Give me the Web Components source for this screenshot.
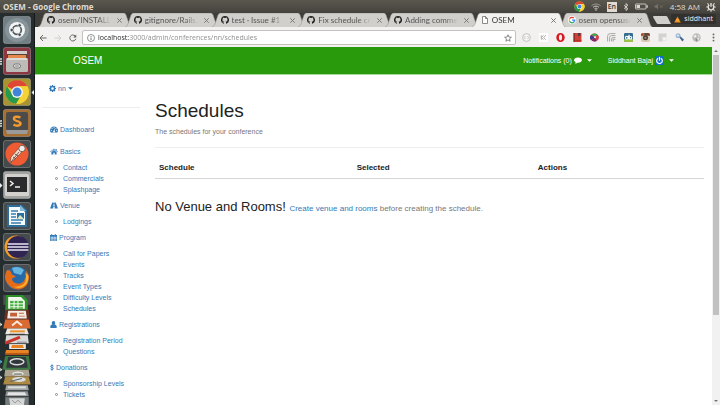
<!DOCTYPE html>
<html lang="en">
<head>
<meta charset="utf-8">
<title>OSEM</title>
<style>
  html, body { margin: 0; height: 100%; }
  body { overflow: hidden; background: #fff; font-family: "Liberation Sans", Arial, sans-serif; }
</style>
</head>
<body>
<osem-desktop></osem-desktop>
<script>
const base = '*,*::before{box-sizing:border-box}button{font:inherit;color:inherit;background:none;border:0;padding:0;margin:0;cursor:pointer}a{text-decoration:none}svg{display:block}';

function define(name, render) {
  customElements.define(name, class extends HTMLElement {
    connectedCallback() {
      if (this.shadowRoot) return;
      const t = document.createElement('template');
      const r = render(this);
      t.innerHTML = `<style>${base}${r.css}</style>${r.html}`;
      this.attachShadow({ mode: 'open' }).append(t.content.cloneNode(true));
    }
  });
}

/* Small glyphs: [viewBox, markup] */
const glyphs = {
  cog: ['0 0 16 16', '<path fill="currentColor" fill-rule="evenodd" d="M6.6 0h2.8l.4 2.2 1.3.5L13 1.4l1.7 1.8-1.2 1.8.5 1.2 2 .4v2.8l-2.1.4-.5 1.3 1.2 1.8-1.8 1.8-1.8-1.2-1.3.5L9.4 16H6.6l-.4-2.1-1.3-.5-1.8 1.2-1.8-1.8 1.2-1.8-.5-1.3L0 9.4V6.6l2-.4.6-1.3-1.2-1.8 1.8-1.8 1.8 1.3 1.2-.5zM8 5a3 3 0 1 0 0 6 3 3 0 0 0 0-6z"/>'],
  dash: ['0 0 18 16', '<path fill="currentColor" fill-rule="evenodd" d="M9 1a9 9 0 0 0-7.500 14h15A9 9 0 0 0 9 1zM9 2.500a1.200 1.200 0 1 1 0 2.400 1.200 1.200 0 0 1 0-2.400zM4.500 4.500a1.200 1.200 0 1 1 0 2.400 1.200 1.200 0 0 1 0-2.400zM2.800 9a1.200 1.200 0 1 1 0 2.400 1.200 1.200 0 0 1 0-2.400zM15.200 9a1.200 1.200 0 1 1 0 2.400 1.200 1.200 0 0 1 0-2.400zM13.500 4.500a1.200 1.200 0 1 1 0 2.400 1.200 1.200 0 0 1 0-2.400zM10 6l1 .3-.8 4a2.100 2.100 0 1 1-1.300-.3z"/>'],
  home: ['0 0 18 16', '<path fill="currentColor" d="M9 1L0 8.500l1 1.200L9 3l8 6.700 1-1.200-3-2.500V2h-2v2.300zM9 4.500L3 9.500V15h4.500v-4h3v4H15V9.500z"/>'],
  road: ['0 0 18 16', '<path fill="currentColor" fill-rule="evenodd" d="M5 1h3.300l-.2 2.500h1.800L9.700 1H13l5 14h-7.200l-.3-4.500h-3L7.200 15H0zM8 5l-.3 4h2.600L10 5z"/>'],
  calendar: ['0 0 16 16', '<path fill="currentColor" fill-rule="evenodd" d="M3 0h2v2h6V0h2v2h3v14H0V2h3zM1.500 6v2.500H4V6zm3.500 0v2.500h2.500V6zm3.500 0v2.500H11V6zM12 6v2.500h2.500V6zM1.500 9.500V12H4V9.500zm3.500 0V12h2.500V9.500zm3.500 0V12H11V9.500zm3.500 0V12h2.500V9.500zM1.500 13v1.800H4V13zM5 13v1.800h2.500V13zm3.500 0v1.800H11V13zm3.500 0v1.800h2.500V13z"/>'],
  user: ['0 0 16 16', '<path fill="currentColor" d="M8 0a4 4.500 0 0 1 2.500 8C14 8 15.500 10 15.500 15q0 1-1.500 1H2q-1.500 0-1.500-1C.5 10 2 8 5.500 8A4 4.500 0 0 1 8 0z"/>'],
  dollar: ['0 0 10 16', '<path fill="none" stroke="currentColor" stroke-width="2" d="M9 4.500C8 3.300 6.500 2.800 5 2.800c-2 0-3.400 1-3.400 2.500C1.600 9 8.600 7 8.600 10.600c0 1.600-1.500 2.600-3.600 2.600-1.700 0-3-.6-4-1.700M5 0v16"/>'],
  comment: ['0 0 18 16', '<path fill="currentColor" d="M9 1c5 0 9 2.500 9 6s-4 6-9 6l-1.500-.1C6 14.500 4 15.500 2 15.700c1-.8 1.600-2.200 1.600-3.600C1.400 11 0 9.100 0 7c0-3.500 4-6 9-6z"/>'],
  caret: ['0 0 8 8', '<path fill="currentColor" d="M0 2h8L4 6z"/>'],
  power: ['0 0 16 16', '<rect width="16" height="16" rx="1" fill="#1470c4"/><path fill="none" stroke="#fff" stroke-width="2" stroke-linecap="round" d="M5 4.500a5 5 0 1 0 6 0M8 2.500v5"/>'],
  github: ['0 0 16 16', '<path fill="#222" d="M8 0a8 8 0 0 0-2.500 15.600c.4 0 .5-.2.500-.4v-1.500c-2.200.5-2.700-1-2.700-1-.4-.9-.9-1.100-.9-1.100-.7-.5.100-.5.100-.5.800.1 1.200.8 1.200.8.700 1.200 1.900.9 2.300.7.100-.5.300-.9.500-1.100-1.800-.2-3.600-.9-3.600-4 0-.9.300-1.600.8-2.200 0-.2-.3-1 .1-2.100 0 0 .7-.2 2.200.8a8 8 0 0 1 4 0c1.500-1 2.200-.8 2.200-.8.400 1.100.1 1.900.1 2.100.5.600.8 1.300.8 2.200 0 3.100-1.900 3.700-3.700 3.900.3.300.6.800.6 1.500v2.300c0 .2.100.5.500.4A8 8 0 0 0 8 0z"/>'],
  page: ['0 0 16 16', '<path fill="#fff" stroke="#666" stroke-width="1.500" d="M3 1h6l4 4v10H3zM9 1v4h4"/>'],
  google: ['0 0 16 16', '<circle cx="8" cy="8" r="8" fill="#fff"/><g fill="none" stroke-width="2.500"><path stroke="#ea4335" d="M12 4.200A5.500 5.500 0 0 0 3.100 5.600"/><path stroke="#fbbc05" d="M3.200 5.400a5.500 5.500 0 0 0 0 5.200"/><path stroke="#34a853" d="M3.100 10.400a5.500 5.500 0 0 0 8.600 1.700"/><path stroke="#4285f4" d="M11.500 12.200A5.500 5.500 0 0 0 13.500 8H8"/></g>'],
  close: ['0 0 8 8', '<path stroke="#777" stroke-width="1.100" d="M1.500 1.500l5 5m0-5l-5 5"/>'],
  back: ['0 0 16 16', '<path fill="none" stroke="#5f5f5f" stroke-width="1.900" d="M15 8H2.500M8 2L2 8l6 6"/>'],
  forward: ['0 0 16 16', '<path fill="none" stroke="#ccc" stroke-width="1.900" d="M1 8h12.500M8 2l6 6-6 6"/>'],
  reload: ['0 0 16 16', '<path fill="none" stroke="#5f5f5f" stroke-width="1.900" d="M13.500 9.500A6 6 0 1 1 12 3.800"/><path fill="#5f5f5f" d="M14.500 1v6h-6z"/>'],
  info: ['0 0 16 16', '<circle cx="8" cy="8" r="7" fill="none" stroke="#666" stroke-width="1.400"/><path stroke="#666" stroke-width="1.800" d="M8 7v5M8 4v1.800"/>'],
  star: ['0 0 16 16', '<path fill="none" stroke="#666" stroke-width="1.500" d="M8 1.500l1.900 4.600 4.900.4-3.700 3.200 1.100 4.800L8 11.900l-4.200 2.600 1.100-4.800L1.200 6.500l4.900-.4z"/>'],
  chrome: ['0 0 28 28', '<circle cx="14" cy="14" r="13" fill="#e8c928"/><path fill="#df4633" d="M14 14L2.700 7.500A13 13 0 0 1 25.300 7.500H14z"/><path fill="#279a50" d="M2.700 7.500A13 13 0 0 0 13 27l5.600-10H14l-5 0z"/><path fill="#f5d336" d="M14 7.500h11.300A13 13 0 0 1 13 27l6.600-9.700z"/><circle cx="14" cy="14" r="6.500" fill="#f6f6f6"/><circle cx="14" cy="14" r="5" fill="#4285d8"/>'],
  wifi: ['0 0 20 16', '<g fill="none" stroke="#dcd8cf" stroke-width="1.800"><path opacity=".6" d="M1 5.500c5-4.500 13-4.500 18 0"/><path d="M4 8.500c3.500-3 8.500-3 12 0M7 11.500c2-1.500 4-1.500 6 0"/></g><circle cx="10" cy="14" r="1.500" fill="#dcd8cf"/>'],
  bluetooth: ['0 0 12 16', '<path fill="none" stroke="#dcd8cf" stroke-width="1.700" d="M2 4.500l8 7L6 15V1l4 3.500-8 7"/>'],
  battery: ['0 0 26 14', '<rect x="1" y="2" width="21" height="10" rx="1" fill="none" stroke="#dcd8cf" stroke-width="1.700"/><path fill="#dcd8cf" d="M3 4h7v6H3zM23 4.500h2.500v5H23z"/>'],
  mute: ['0 0 20 14', '<path fill="#77746c" d="M1 5h3l4-4v12L4 9H1z"/><path stroke="#77746c" stroke-width="1.500" d="M12 4.500l5 5m0-5l-5 5"/>'],
  gear: ['0 0 16 16', '<g fill="none" stroke="#e6e2da"><path stroke-width="2.200" d="M5.200 4.500a4.500 4.500 0 1 0 5.600 0M8 1.500v6"/><path stroke-width="1.800" d="M8 13v2.500M.5 8H3m10 0h2.500M2.300 2.300l2 2m7.400 7.400l2 2m0-11.400l-2 2m-7.400 7.400l-2 2"/></g>'],
  alert: ['0 0 16 16', '<path fill="#f28c0f" d="M8 1l7.500 14H.5z"/><path stroke="#ffd28a" stroke-width="1" d="M5 8h6M4 11h8"/>'],
  e1: ['0 0 16 16', '<circle cx="8" cy="8" r="7" fill="#f5f5f5" stroke="#b9b9b9" stroke-width="1.500"/><path fill="none" stroke="#aaa" stroke-width="1.300" d="M6 5.500L3.800 8 6 10.500M10 5.500L12.200 8 10 10.500"/>'],
  e2: ['0 0 16 16', '<path fill="#fff" d="M0 0h16v16H0z"/><path fill="none" stroke="#999" stroke-width="1.400" d="M8 4L4.500 8 8 12M12 4L8.500 8l3.500 4M4 4v8"/>'],
  e3: ['0 0 16 16', '<path fill="#d7191f" fill-rule="evenodd" d="M8 0a7.500 8 0 1 0 0 16A7.500 8 0 0 0 8 0zM8 2.500c1.700 0 2.800 2.300 2.800 5.500S9.700 13.500 8 13.500 5.200 11.200 5.200 8 6.300 2.500 8 2.500z"/>'],
  e4: ['0 0 16 16', '<rect x="1" width="14" height="16" rx="1" fill="#cf4038"/><path fill="#7d2620" d="M1 0h2v16H1z"/><path fill="#463c44" d="M9 0h4v6l-2-1.500L9 6z"/><path stroke="#a8302a" stroke-width="1.500" d="M4 13.500h11"/>'],
  e5: ['0 0 16 16', '<ellipse cx="8" cy="8" rx="8" ry="7" fill="#d43d4a"/><path fill="#3b3e8e" d="M8 8L2 12.500A8 7 0 0 1 2 3.500z"/><path fill="#3ba754" d="M8 8L3 2.500A8 7 0 0 1 13 2.500z"/><path fill="#7b2d70" d="M8 8l-5 5.500a8 7 0 0 0 9 .5z"/><circle cx="9" cy="7.500" r="2" fill="#e6d4df"/>'],
  e6: ['0 0 16 16', '<g fill="none" stroke="#a4a4a4" stroke-width="1.700"><path d="M1 15V6q0-5 5-5h9M4.500 15V8.500q0-4 4-4H15M8 15v-4q0-3 3-3h4"/></g><path fill="#a4a4a4" d="M10 10h5v2h-3v3h-2z"/>'],
  e7: ['0 0 16 16', '<rect width="16" height="16" rx="2" fill="#366d8f"/><path fill="#9fc34a" d="M0 11h16v3q0 2-2 2H2q-2 0-2-2z"/><circle cx="5" cy="8.500" r="2.500" fill="none" stroke="#fff" stroke-width="2"/><circle cx="11.500" cy="8.500" r="2.300" fill="none" stroke="#fff" stroke-width="2"/><path stroke="#fff" stroke-width="2" d="M9 3v8M8 5v6"/>'],
  e8: ['0 0 16 16', '<rect width="16" height="16" rx="3" fill="#d9cbb4"/><path fill="#6b4430" d="M0 5V3q0-3 3-3h10q3 0 3 3v2z"/><path fill="#c34a3c" d="M2 0h2v5H2z"/><path fill="#67a35a" d="M4 0h2v5H4z"/><circle cx="8" cy="8.500" r="4.500" fill="#4c3930"/><circle cx="8" cy="8.500" r="2" fill="#8b8a9a"/>'],
  e9: ['0 0 16 16', '<path fill="#d2d2d2" d="M1 1h14v6H8v8H1z"/><path fill="#f4f4f4" stroke="#ddd" d="M8.500 7.500h6v6h-6z"/>'],
  e10: ['0 0 16 16', '<circle cx="5.500" cy="5" r="4.500" fill="#9db8d6"/><path fill="#3d6590" d="M8 8l2-2 6 6-3 3z"/><circle cx="5" cy="4.500" r="2" fill="#dce8f3"/>'],
  e11: ['0 0 16 16', '<circle cx="8" cy="8" r="7.500" fill="#bcbcbc"/><path fill="#eee" d="M2 5l5-2 1 3-3 3zM9 9l4-1-2 5-2-1zM11 3l3 3-3 0z"/><path fill="#8e8e8e" d="M6 9l4 1-1 5H7z"/>'],
  menu: ['0 0 16 16', '<g fill="#666"><circle cx="8" cy="2.500" r="1.700"/><circle cx="8" cy="8" r="1.700"/><circle cx="8" cy="13.500" r="1.700"/></g>']
};
define('glyph-icon', el => {
  const [vb, body] = glyphs[el.getAttribute('name')];
  const [, , w, h] = vb.split(' ').map(Number);
  const size = Number(el.getAttribute('size') || 8);
  return {
    css: `:host{display:inline-block;flex:none;vertical-align:middle;height:${size}px;width:${Math.round(size * w / h)}px}svg{width:100%;height:100%}`,
    html: `<svg viewBox="${vb}" aria-hidden="true">${body}</svg>`
  };
});

/* Ubuntu desktop panel */
define('top-panel', () => ({
  css: `:host{display:flex;align-items:center;justify-content:space-between;height:13px;padding:0 4px 0 3px;color:#dfdbd2;background:linear-gradient(#5a574e,#45433e);font:8px/13px "Open Sans",sans-serif}
  b{font-weight:700}
  .tray{display:flex;align-items:center;gap:6px}
  .lang{background:#dfdbd2;color:#3c3b37;width:10px;height:10px;line-height:10px;font-size:7px;font-weight:600;text-align:center}`,
  html: `<b>OSEM - Google Chrome</b>
  <div class="tray"><glyph-icon name="chrome" size="11"></glyph-icon><glyph-icon name="wifi" size="8"></glyph-icon><span class="lang">En</span><glyph-icon name="bluetooth" size="8"></glyph-icon><glyph-icon name="battery" size="7"></glyph-icon><glyph-icon name="mute" size="7"></glyph-icon><span>4:58 AM</span><glyph-icon name="gear" size="10"></glyph-icon></div>`
}));

/* Launcher */
const apps = {
  ubuntu: ['#728086', '<circle cx="14" cy="14" r="12" fill="#9aa7ab" opacity=".5"/><circle cx="14" cy="14" r="8" fill="#f3f5f5"/><circle cx="14" cy="14" r="4.300" fill="none" stroke="#4f5b60" stroke-width="1.700"/><g fill="#3f4a4f" stroke="#f3f5f5" stroke-width=".7"><circle cx="8.700" cy="14" r="1.700"/><circle cx="16.600" cy="9.300" r="1.700"/><circle cx="16.600" cy="18.700" r="1.700"/></g>', ''],
  files: ['#8c3742', '<path fill="#5b4137" d="M4 6h20v8H4z"/><path fill="#e58a4d" d="M5 8h18v4H5z"/><path fill="#cfcdc9" d="M4 4h20v3H4z"/><rect x="3" y="11" width="22" height="14" rx="1.500" fill="#bdbbb8"/><path fill="#dddbd8" d="M4 11h20v2H4z"/><rect x="10.500" y="17" width="7" height="4" rx="2" fill="#eee" stroke="#777"/><path stroke="#777" d="M12 19h4"/>', 'multi'],
  chrome: ['#a89433', `<g transform="translate(1.500 1.500) scale(.9)">${glyphs.chrome[1]}</g>`, 'one focus'],
  sublime: ['#a86f32', '<rect x="3" y="3" width="22" height="19" rx="2" fill="#4b4b4b"/><path fill="#9a9a9a" d="M3 21h22l-1 4H4z"/><path fill="none" stroke="#f29a2e" stroke-width="2.500" d="M17.500 8.500C14 6.800 10.800 7.800 11 10c.2 2.500 6.300 1.700 6.500 4.300.1 2.400-3.500 3.200-7 1.400"/>', 'multi'],
  postman: ['#454a4c', '<circle cx="14" cy="14" r="11.500" fill="#ef5b32"/><path fill="#f2ddcc" stroke="#754636" stroke-width=".7" d="M7 23l1-6 7-8 3-1 1 2-1 3-7 7z"/><circle cx="19" cy="8.500" r="3.200" fill="#eee" stroke="#69483c" stroke-width=".8"/><path stroke="#69483c" stroke-width=".9" d="M8 22l8-10M10 17l3 2M12 14l3 2"/>', ''],
  terminal: ['#a3a3a1', '<rect x="2" y="3" width="24" height="22" rx="1.500" fill="#d2d1ce"/><rect x="4" y="6" width="20" height="15" fill="#2b2a2d"/><path fill="none" stroke="#f1f1f1" stroke-width="1.500" d="M7 10l3 2.500L7 15M12 16h5"/>', 'one'],
  writer: ['#454c50', '<path fill="#2d6d98" d="M4 3h15l5 5v17H4z"/><path fill="#f6fafc" d="M6 5h11l5 5v13H6z"/><path fill="#86b9da" d="M17 3l6 6h-6z"/><path stroke="#397fae" stroke-width="1.300" d="M8 9h7M8 12h5M8 15h5M8 18h12M8 21h10"/><path fill="#2a719f" d="M14 11h7v6h-7z"/><path fill="#dce8c2" d="M14 17l3-4 4 4z"/>', ''],
  eclipse: ['#454a4d', '<circle cx="13" cy="14" r="11.500" fill="#ee9d27"/><circle cx="15" cy="14" r="11" fill="#302453"/><path stroke="#e8e5f2" stroke-width="1.700" d="M4.500 11h21M4.500 14h21M4.500 17h21"/>', ''],
  firefox: ['#494d50', '<circle cx="14" cy="14" r="11.500" fill="#2768a8"/><path fill="#66b5dd" d="M9 4q7-3 12 2l-3 5-7-2z"/><path fill="#e66b18" d="M4 6q-4 7 0 13 5 7 12 6.500 9-1 10-11 0-5-3-8 1 5-1 8-2 6-8 5-5-1-5-5l4-2-4-2-2-4z"/><path fill="#f6b32e" d="M25.500 12q0 8-6 11-5 2-9-.5 9 1 12-5 1-4 0-9z"/>', '']
};
define('launcher-item', el => {
  const [bg, art, state] = apps[el.getAttribute('app')];
  const pips = (state.includes('multi') ? '<path stroke="#ddd" stroke-width="1.300" d="M0 12h2M0 14.500h2M0 17h2"/>' : '') +
    (state.includes('one') ? '<path fill="#eee" d="M0 12l2.500 2.500L0 17z"/>' : '') +
    (state.includes('focus') ? '<path fill="#eee" d="M34 12l-2.500 2.500L34 17z"/>' : '');
  return {
    css: ':host{display:block}button,svg{display:block;width:100%}',
    html: `<button aria-label="${el.getAttribute('app')}"><svg viewBox="0 0 34 28">${pips}<g transform="translate(3)"><rect x=".5" y=".5" width="27" height="27" rx="2" fill="${bg}" stroke="#fff" stroke-opacity=".25"/>${art}</g></svg></button>`
  };
});
define('app-launcher', () => ({
  css: `:host{display:flex;flex-direction:column;gap:3px;padding-top:3px;overflow:hidden;background:#262d2f;border-right:1px solid #15191a}
  .stack{width:100%}`,
  html: Object.keys(apps).map(a => `<launcher-item app="${a}"></launcher-item>`).join('') + `
  <svg class="stack" viewBox="0 0 34 112">
    <path fill="#4a4f50" d="M3 0h28v10H3z"/>
    <path fill="#2f8f2b" d="M6 0h17l5 5v11H5z"/><path fill="#f2f8ee" d="M8 2h13l4 4v8H8z"/><path fill="#45ad3b" d="M10 6h13v8H10z"/><path stroke="#fff" d="M10 9h13M10 12h13M14 6v8M18 6v8"/>
    <path fill="#6b2f20" d="M5 15h24l1 10H4z"/><path fill="#f4ece6" d="M8 16h18l1 8H7z"/><path fill="#c4603a" d="M10 18h7v4h-7zM19 18h5v1h-5zM19 21h6v1h-6z"/>
    <path fill="#d96a32" d="M5 25h24l2 9H3z"/><path fill="none" stroke="#fbe9de" stroke-width="2" d="M12 31l5-4 5 4"/>
    <path fill="#ece9e4" d="M7 34h20l2 6H5z"/><path fill="#e9922e" d="M10 36h15v2H10z"/><path stroke="#333" d="M9 40h16"/>
    <path fill="#d9d9d9" d="M6 41h22l1 8H5z"/><path stroke="#c7352a" stroke-width="3" d="M5 49l15-6"/><path stroke="#888" d="M17 48h10"/>
    <path fill="#efe9e3" d="M9 50h17v5H9z"/><path fill="#e98424" d="M12 51h11l1 3H11zM6 56h23v3H5z"/><path fill="#b95b17" d="M5 59h24v2H5z"/>
    <path fill="#3b7a43" d="M5 62h24l2 14H2z"/><path fill="#30363a" d="M8 63h18l2 11H6z"/><ellipse cx="17" cy="68" rx="7" ry="3" fill="none" stroke="#d7dadb" stroke-width="1.500"/>
    <path fill="#a9a38f" d="M5 76h24l1 7H4z"/><ellipse cx="18" cy="80" rx="6" ry="2" fill="#e3e5df"/><path fill="#555" d="M14 80h8v1h-8z"/>
    <path fill="#ac8944" d="M5 83h24l2 8H3z"/><ellipse cx="19" cy="86" rx="7" ry="2.500" fill="#d9dcd8"/><path stroke="#55636b" d="M10 88l12-3"/>
    <path fill="#9fa3a4" d="M6 92h22l1 5H5z"/><path fill="#dcdedd" d="M8 93h18v2H8z"/>
    <path fill="#8b9091" d="M6 98h22l1 5H5z"/><path fill="#e2e3e2" d="M8 99h17l2 3H7z"/>
    <path fill="#767b7d" d="M5 104h24v8H5z"/><path fill="#d5d7d6" d="M9 105h16l-1 7H10z"/><path fill="none" stroke="#999" d="M12 107l3 3 3-3 3 3"/>
    <path fill="#eee" d="M0 28l2 2-2 2zM0 74l2 2-2 2zM0 82l2 2-2 2z"/><path fill="#59c3ee" d="M0 66l2 2-2 2z"/>
  </svg>`
}));

/* Browser */
define('browser-tab', el => {
  const on = el.hasAttribute('active');
  return {
    css: `:host{display:flex;align-items:center;position:relative;flex:0 1 94px;min-width:0;margin-right:-7px;height:14px;padding:0 9px;gap:3px;z-index:${on ? 2 : 1};color:${on ? '#333' : '#555'};font:8px/14px Lato,"Open Sans",sans-serif}
    .shape{position:absolute;inset:0;width:100%;height:100%;z-index:-1}
    span{flex:1;min-width:0;overflow:hidden;white-space:nowrap;-webkit-mask-image:linear-gradient(90deg,#000 75%,transparent)}
    button{margin-left:2px}`,
    html: `<svg class="shape" viewBox="0 0 94 14" preserveAspectRatio="none"><path fill="${on ? '#f2f1f0' : '#d0cfcc'}" stroke="#8e8c88" stroke-width=".5" d="M0 14Q2 13.500 3 11L6 2Q7 0 8.500 0H86Q87.500 0 88.300 2L91.500 11.500Q92.500 14 94 14"/></svg>
    <glyph-icon name="${el.getAttribute('icon')}" size="8"></glyph-icon><span><slot></slot></span><button aria-label="Close tab"><glyph-icon name="close" size="7"></glyph-icon></button>`
  };
});
define('tab-strip', () => ({
  css: `:host{display:flex;align-items:flex-end;height:15px;padding:0 4px 0 3px;background:#3f3d39;border-bottom:1px solid #f2f1f0}
  .new{width:18px;height:8px;margin:0 0 3px 8px}
  .new svg{width:18px;height:8px}
  .who{display:flex;align-items:center;gap:3px;align-self:flex-start;margin:1px 0 0 auto;padding:0 3px;height:10px;border-radius:2px;background:#32312e;color:#eee;font:7px/10px "Open Sans",sans-serif}`,
  html: `<browser-tab icon="github">osem/INSTALL.md</browser-tab><browser-tab icon="github">gitignore/Rails.gi</browser-tab><browser-tab icon="github">test · Issue #1 · o</browser-tab><browser-tab icon="github">Fix schedule crea</browser-tab><browser-tab icon="github">Adding commerc</browser-tab><browser-tab icon="page" active>OSEM</browser-tab><browser-tab icon="google">osem opensuse</browser-tab>
  <button class="new" aria-label="New tab"><svg viewBox="0 0 18 8"><path fill="#d0cfcc" d="M1 0h12q1 0 1.500 1L18 8H5Q4 8 3.500 7L0 1Q0 0 1 0z"/></svg></button>
  <button class="who"><glyph-icon name="alert" size="7"></glyph-icon>siddhant</button>`
}));
define('browser-toolbar', () => ({
  css: `:host{display:flex;align-items:center;height:19px;padding:0 2px 0 4px;background:#f2f1f0}
  .nav{display:flex;gap:7px;margin-right:5px}
  .box{display:flex;flex:1;align-items:center;gap:3px;height:15px;padding:0 3px 0 4px;background:#fff;border:1px solid #c4c2be;border-radius:2px}
  input{flex:1;min-width:0;height:13px;border:0;padding:0;outline:0;font:7px/13px "Open Sans",sans-serif;color:#888;background:linear-gradient(90deg,#222 31px,#888 31px) text;-webkit-text-fill-color:transparent}
  .ext{display:flex;gap:8px;margin-left:6px}
  button{display:flex}`,
  html: `<div class="nav"><button aria-label="Back"><glyph-icon name="back"></glyph-icon></button><button aria-label="Forward"><glyph-icon name="forward"></glyph-icon></button><button aria-label="Reload"><glyph-icon name="reload"></glyph-icon></button></div>
  <div class="box"><glyph-icon name="info"></glyph-icon><input aria-label="Address" value="localhost:3000/admin/conferences/nn/schedules"><button aria-label="Bookmark"><glyph-icon name="star"></glyph-icon></button></div>
  <div class="ext">${['e1','e2','e3','e4','e5','e6','e7','e8','e9','e10','e11','menu'].map(n => `<button aria-label="Extension ${n}"><glyph-icon name="${n}" size="9"></glyph-icon></button>`).join('')}</div>`
}));
define('page-scrollbar', () => ({
  css: `:host{display:flex;flex-direction:column;align-items:center;width:8px;background:#f1f1f1}
  .up,.down{height:8px;display:grid;place-items:center;color:#777}
  .up{transform:rotate(180deg)}
  .track{flex:1;width:6px}.thumb{height:76%;background:#c1c1c1}`,
  html: `<div class="up"><glyph-icon name="caret" size="4"></glyph-icon></div><div class="track"><div class="thumb"></div></div><div class="down"><glyph-icon name="caret" size="4"></glyph-icon></div>`
}));

/* OSEM site */
define('site-header', () => ({
  css: `:host{display:flex;align-items:center;height:28px;padding:0 38px;background:#2a9a0d;border-bottom:1px solid #a5d899;color:#fff;font-size:7px;line-height:10px}
  .brand{color:#fff;font-size:10px;margin-right:auto}
  button{display:flex;align-items:center;gap:2px}
  button+button{margin-left:16px}
  glyph-icon[name=caret]{margin-left:3px}`,
  html: `<a class="brand" href="#">OSEM</a><button>Notifications (0) <glyph-icon name="comment" size="7"></glyph-icon><glyph-icon name="caret" size="5"></glyph-icon></button><button>Siddhant Bajaj <glyph-icon name="power" size="9"></glyph-icon><glyph-icon name="caret" size="5"></glyph-icon></button>`
}));
define('nav-group', el => ({
  css: `:host{display:block}
  .head{display:flex;align-items:center;gap:2px;height:11px;color:#337ab7}
  ::slotted(ul){margin:5px 0 0;padding:0 0 0 5px;list-style:none}`,
  html: `<a class="head" href="#"><glyph-icon name="${el.getAttribute('icon')}" size="7"></glyph-icon>${el.getAttribute('label')}</a><slot></slot>`
}));
const groups = [
  ['home', 'Basics', ['Contact', 'Commercials', 'Splashpage']],
  ['road', 'Venue', ['Lodgings']],
  ['calendar', 'Program', ['Call for Papers', 'Events', 'Tracks', 'Event Types', 'Difficulty Levels', 'Schedules']],
  ['user', 'Registrations', ['Registration Period', 'Questions']],
  ['dollar', 'Donations', ['Sponsorship Levels', 'Tickets']]
];
define('side-nav', () => ({
  css: `:host{display:block;width:105px;padding:7px 0 0 7px;font-size:7px;line-height:11px}
  .conf{display:flex;align-items:center;gap:2px;height:12px;margin-left:7px;color:#337ab7}
  hr{margin:13px 0 16px;border:0;border-top:1px solid #eee}
  nav{display:flex;flex-direction:column;gap:5px;padding-left:8px}
  nav nav-group:first-child{margin-bottom:6px}
  li{display:flex;align-items:center;gap:5px}
  li::before{content:"";width:3px;height:3px;border:1px solid #888;border-radius:50%}
  li a{color:#337ab7}
  `,
  html: `<button class="conf"><glyph-icon name="cog" size="7"></glyph-icon>nn<glyph-icon name="caret" size="5"></glyph-icon></button><hr>
  <nav><nav-group icon="dash" label="Dashboard"></nav-group>${groups.map(([i, l, items]) => `<nav-group icon="${i}" label="${l}"><ul>${items.map(t => `<li><a href="#">${t}</a></li>`).join('')}</ul></nav-group>`).join('')}</nav>`
}));
define('schedules-page', () => ({
  css: `:host{display:block;flex:1;min-width:0;padding:25px 8px 0 15px;font-size:7px;line-height:10px;color:#777}
  h1{margin:0;font-size:19px;line-height:22px;font-weight:400;color:#222}
  p{margin:5px 0 10px}
  hr{margin:0 0 11px;border:0;border-top:1px solid #eee}
  table{width:100%;border-collapse:collapse;table-layout:fixed}
  th{padding:3px 4px 5px;text-align:left;font-size:8px;line-height:11px;color:#222;border-bottom:1px solid #d6d6d6}
  th:nth-child(1){width:36%}th:nth-child(2){width:33%}
  h2{margin:20px 0 0;font-size:13px;line-height:15px;font-weight:400;color:#222}
  small{font-size:8px;color:#777}small a{color:#337ab7}`,
  html: `<h1>Schedules</h1><p>The schedules for your conference</p><hr>
  <table><thead><tr><th>Schedule</th><th>Selected</th><th>Actions</th></tr></thead></table>
  <h2>No Venue and Rooms! <small><a href="#">Create venue and rooms</a> before creating the schedule.</small></h2>`
}));
define('osem-desktop', () => ({
  css: `:host{display:flex;flex-direction:column;height:100vh}
  .work{flex:1;min-height:0;display:flex}
  app-launcher{width:35px;flex:none}
  .window{flex:1;min-width:0;display:flex;flex-direction:column}
  .view{flex:1;min-height:0;display:flex}
  .site{flex:1;min-width:0;overflow:hidden}
  .body{display:flex}`,
  html: `<top-panel></top-panel><div class="work"><app-launcher></app-launcher><div class="window"><tab-strip></tab-strip><browser-toolbar></browser-toolbar><div class="view"><div class="site"><site-header></site-header><div class="body"><side-nav></side-nav><schedules-page></schedules-page></div></div><page-scrollbar></page-scrollbar></div></div></div>`
}));
</script>
</body>
</html>
